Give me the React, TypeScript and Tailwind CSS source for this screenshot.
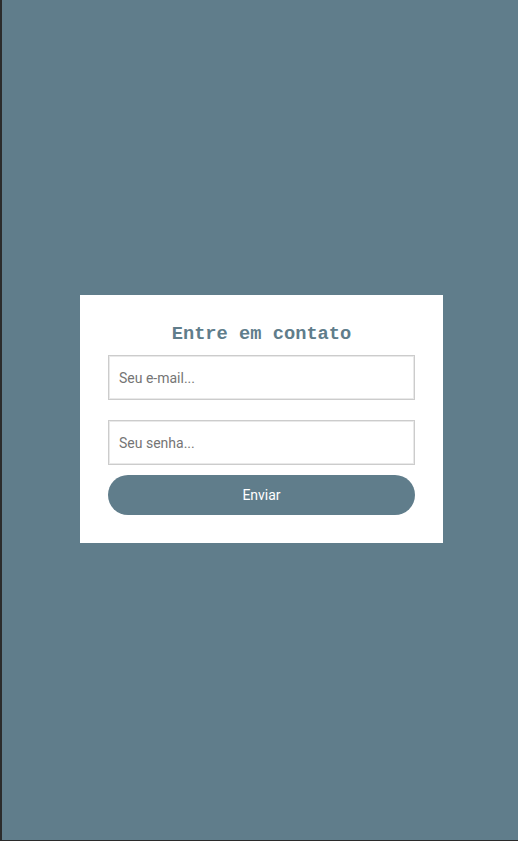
import React from "react";

export default function App() {
  return (
    <div className="w-[518px] h-[841px] bg-[#607d8b] border-l-2 border-b border-[#2b2b2b] flex flex-col justify-center pb-[2px]" style={{ fontFamily: "Roboto, Arial, sans-serif" }}>
      <div className="ml-[78px] w-[363px] h-[248px] bg-white px-[28px] pt-[28px] pb-[28px] flex flex-col">
        <h3
          className="text-center text-[18.72px] font-bold text-[#607d8b] leading-[22px] mb-[10px]"
          style={{ fontFamily: '"Liberation Mono", "Courier New", monospace' }}
        >
          Entre em contato
        </h3>
        <input
          type="text"
          placeholder="Seu e-mail..."
          className="w-full h-[45px] border border-[#cccccc] shadow-[inset_0_0_0_1px_#e9e9e9] px-[10px] text-[14px] text-[#333] placeholder:text-[#757575] outline-none"
        />
        <input
          type="password"
          placeholder="Seu senha..."
          className="w-full h-[45px] mt-[20px] border border-[#cccccc] shadow-[inset_0_0_0_1px_#e9e9e9] px-[10px] text-[14px] text-[#333] placeholder:text-[#757575] outline-none"
        />
        <button className="w-full h-[40px] mt-[10px] rounded-full bg-[#607d8b] text-white text-[14px]">
          Enviar
        </button>
      </div>
    </div>
  );
}
